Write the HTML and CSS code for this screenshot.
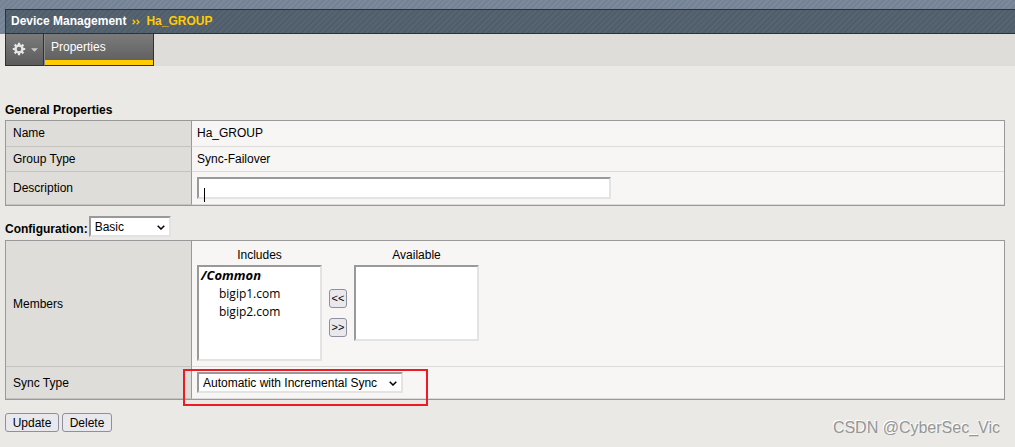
FILE: index.html
```html
<!DOCTYPE html>
<html lang="en">
<head>
<meta charset="utf-8">
<title>Device Management - Ha_GROUP</title>
<link rel="stylesheet" href="styles.css">
</head>
<body>
<header class="banner">
  <nav class="breadcrumb" aria-label="Breadcrumb">
    <span>Device Management</span>
    <svg class="crumb-sep" viewBox="0 0 8 6" aria-hidden="true"><path d="M.7.7 3 3 .7 5.3M4.7.7 7 3 4.7 5.3"/></svg>
    <span class="crumb-current">Ha_GROUP</span>
  </nav>
</header>
<div class="menubar">
  <button class="gear-button" type="button" aria-label="Options">
    <svg class="gear" viewBox="0 0 14 14" aria-hidden="true">
      <g fill="none" stroke="#e6e6e6">
        <circle cx="7" cy="7" r="3.5" stroke-width="2.4"/>
        <path stroke-width="2.2" d="M7 .8v2.2M7 11v2.2M.8 7H3M11 7h2.2M2.6 2.6l1.6 1.6M9.8 9.8l1.6 1.6M11.4 2.6 9.8 4.2M4.2 9.8l-1.6 1.6"/>
      </g>
    </svg>
    <svg class="caret" viewBox="0 0 8 4" aria-hidden="true"><path fill="#c8c8c8" d="M0 0h8L4 4z"/></svg>
  </button>
  <a class="tab" href="#properties">Properties</a>
</div>
<main class="content" id="properties">
  <h2 class="section-title">General Properties</h2>
  <table class="props">
    <tr><th scope="row">Name</th><td>Ha_GROUP</td></tr>
    <tr class="row-type"><th scope="row">Group Type</th><td>Sync-Failover</td></tr>
    <tr class="row-description">
      <th scope="row"><label for="description">Description</label></th>
      <td><div class="input-wrap"><input class="text-input" id="description" type="text"><span class="text-cursor"></span></div></td>
    </tr>
  </table>
  <div class="config-head">
    <label class="section-title" for="config">Configuration:</label>
    <div class="select-wrap select-basic">
      <select class="dropdown" id="config"><option>Basic</option><option>Advanced</option></select>
      <svg class="chevron" viewBox="0 0 8 5" aria-hidden="true"><path d="m.7.7 3.3 3.3L7.3.7"/></svg>
    </div>
  </div>
  <table class="props">
    <tr class="row-members">
      <th scope="row">Members</th>
      <td>
        <div class="members">
          <div class="list-col">
            <label for="includes">Includes</label>
            <select class="listbox listbox-tall" id="includes" size="5" multiple>
              <optgroup label="/Common"><option>bigip1.com</option><option>bigip2.com</option></optgroup>
            </select>
          </div>
          <div class="move-buttons">
            <button class="btn btn-move" type="button">&lt;&lt;</button>
            <button class="btn btn-move" type="button">&gt;&gt;</button>
          </div>
          <div class="list-col">
            <label for="available">Available</label>
            <select class="listbox" id="available" size="4" multiple></select>
          </div>
        </div>
      </td>
    </tr>
    <tr class="row-sync">
      <th scope="row"><label for="sync">Sync Type</label></th>
      <td>
        <div class="select-wrap select-sync">
          <select class="dropdown" id="sync"><option>Automatic with Incremental Sync</option></select>
          <svg class="chevron" viewBox="0 0 8 5" aria-hidden="true"><path d="m.7.7 3.3 3.3L7.3.7"/></svg>
          <span class="highlight"></span>
        </div>
      </td>
    </tr>
  </table>
  <div class="actions">
    <button class="btn" type="button">Update</button>
    <button class="btn" type="button">Delete</button>
  </div>
</main>
<div class="watermark">CSDN @CyberSec_Vic</div>
</body>
</html>
```

FILE: styles.css
```css
* { box-sizing: border-box; }

body {
  margin: 0;
  background: #eae9e5;
  color: #000;
  font: 12px/16px "Liberation Sans", Arial, sans-serif;
}

button, input, select { font: inherit; color: inherit; }

.banner {
  padding: 9px 0 0 5px;
  background: repeating-linear-gradient(135deg, #738295 0 2px, #7b899a 2px 4px);
}

.breadcrumb {
  display: flex;
  align-items: center;
  gap: 6px;
  height: 25px;
  padding: 0 5px 2px;
  border: 1px solid #2f3138;
  border-right: 0;
  background: repeating-linear-gradient(135deg, #505d6a 0 2px, #566370 2px 4px);
  color: #fff;
  font-weight: bold;
}

.crumb-current { color: #fc0; }

.crumb-sep {
  width: 8px;
  height: 6px;
  margin-top: 3px;
  fill: none;
  stroke: #fc0;
  stroke-width: 1.3;
}

.menubar {
  display: flex;
  height: 32px;
  margin-left: 5px;
  background: #deddd9;
}

.gear-button, .tab {
  border: 1px solid #2f3138;
  border-top: 0;
  background: linear-gradient(#7b7b7b, #5c5c5c);
}

.gear-button {
  display: flex;
  align-items: center;
  gap: 5px;
  width: 39px;
  padding: 0 0 2px 6px;
}

.gear { width: 14px; height: 14px; }
.caret { width: 7px; height: 4px; margin-top: 2px; }

.tab {
  width: 110px;
  padding: 5px 6px;
  border-left-color: #8a8a8a;
  box-shadow: inset 0 -5px #fc0;
  color: #fff;
  text-decoration: none;
}

.content { padding: 36px 10px 0 5px; }

.section-title {
  margin: 0;
  font-size: 12px;
  line-height: 16px;
  font-weight: bold;
}

.props {
  width: 100%;
  margin-top: 2px;
  border: 1px solid #999;
  border-spacing: 0;
  table-layout: fixed;
  background: #f7f6f4;
}

.props th, .props td {
  height: 26px;
  padding: 0 5px 2px;
  border-bottom: 1px solid #dcdbd9;
  text-align: left;
  font-weight: normal;
}

.props th {
  width: 186px;
  padding-left: 7px;
  border-right: 1px solid #999;
  border-bottom-color: #c4c3c0;
  background: #deddd9;
}

.props .row-type > * { height: 25px; padding-bottom: 0; }
.props .row-description > * { height: 33px; padding-bottom: 0; }
.props .row-members > * { height: 126px; padding-bottom: 0; }
.props .row-sync > * { height: 32px; padding-bottom: 0; }

.input-wrap, .select-wrap { position: relative; }
.input-wrap { width: 414px; max-width: 100%; }

.text-input, .dropdown, .listbox {
  display: block;
  width: 100%;
  border: 2px solid;
  border-color: #999 #e3e3e3 #e3e3e3 #999;
  border-radius: 0;
  background: #fff;
}

.text-input { height: 22px; padding: 0 5px; }

.text-cursor {
  position: absolute;
  left: 7px;
  top: 11px;
  width: 1px;
  height: 14px;
  background: #000;
}

.config-head {
  display: flex;
  align-items: flex-end;
  gap: 1px;
  margin-top: 10px;
}

.config-head + .props { margin-top: 3px; }

.dropdown {
  height: 21px;
  padding: 0 20px 0 4px;
  appearance: none;
}

.select-basic { width: 82px; }
.select-sync { width: 206px; }

.chevron {
  position: absolute;
  right: 6px;
  top: 9px;
  width: 8px;
  height: 5px;
  fill: none;
  stroke: #000;
  stroke-width: 1.5;
  pointer-events: none;
}

.highlight {
  position: absolute;
  inset: -3px -25px -13px -14px;
  border: 2px solid #ed1c24;
  pointer-events: none;
}

.members {
  display: flex;
  align-items: flex-start;
  gap: 7px;
}

.list-col { width: 125px; text-align: center; }
.list-col label { display: block; margin-bottom: 2px; }

.listbox {
  height: 76px;
  padding: 0;
  overflow: hidden;
  font: 12px/16px "Open Sans", sans-serif;
}

.listbox-tall { height: 96px; }

.listbox optgroup {
  margin-top: -1px;
  font-size: 13px;
  font-weight: bold;
  font-style: italic;
  line-height: 16px;
}

.listbox option {
  height: 18px;
  min-height: 18px;
  padding: 0 0 4px 20px;
  font-size: 12px;
  font-weight: normal;
  font-style: normal;
  line-height: 14px;
}

.move-buttons {
  display: flex;
  flex-direction: column;
  gap: 10px;
  padding-top: 42px;
}

.btn {
  height: 19px;
  padding: 0 6px;
  border: 1px solid #8f8f9d;
  border-radius: 3px;
  background: #e9e9ed;
  line-height: 16px;
}

.btn-move {
  width: 18px;
  padding: 0;
  font-size: 11px;
}

.actions { display: flex; gap: 3px; padding-top: 13px; }
.actions .btn { min-width: 50px; }
.actions .btn:first-child { min-width: 54px; }

.watermark {
  position: absolute;
  right: 15px;
  bottom: 9px;
  color: #969694;
  font-size: 16px;
  line-height: 20px;
  text-shadow: -1px -1px #fff;
}
```
